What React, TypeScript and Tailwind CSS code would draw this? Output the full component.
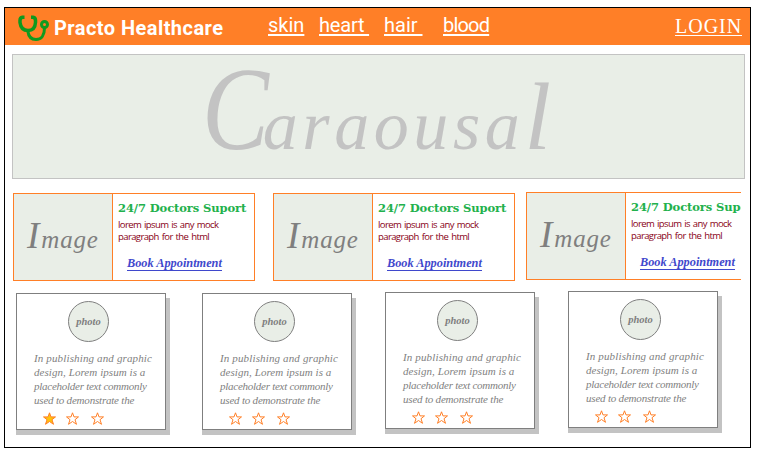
const script = "font-['Liberation_Serif',serif] italic";

function Stethoscope() {
  return (
    <svg width="32" height="27" viewBox="0 0 32 27" fill="none" stroke="#0f9a1f" className="shrink-0">
      <path d="M6.500 2.300H4.500Q2 2.800 2 5.500V7.500Q3 15.500 10 15.500T17.500 7.500V5.500Q17.500 2.800 15 2.300H13" strokeWidth="3.500" />
      <path d="M9.800 16C10.500 21.500 13.500 24.500 18 24.500C23.500 24.500 26.500 20 26.500 13" strokeWidth="3" />
      <circle cx="26.500" cy="9.500" r="3" strokeWidth="3" />
    </svg>
  );
}

function Star({ filled = false }: { filled?: boolean }) {
  return (
    <svg width="13" height="13" viewBox="0 0 13 13" className="shrink-0">
      <path
        d="M6.500 .8L8 4.900H12.500L9 7.700L10.500 12.300L6.500 9.500L2.500 12.300L4 7.700L.5 4.900H5Z"
        fill={filled ? "#ffc20e" : "#fff"}
        stroke="#ff7f27"
      />
    </svg>
  );
}

function Feature({ className = "" }: { className?: string }) {
  return (
    <article className={`flex h-[88px] w-[242px] shrink-0 border border-[#ff7f27] ${className}`}>
      <div className={`flex w-[99px] shrink-0 items-baseline border-r border-[#ff7f27] bg-[#e9eee7] pl-[13px] leading-[84px] text-[#7f7f7f] ${script}`}>
        <span className="text-[37px]">I</span>
        <span className="ml-[2px] text-[25px] tracking-[0.8px]">mage</span>
      </div>
      <div className="flex shrink-0 flex-col items-start whitespace-nowrap pl-[5px] pt-[6px]">
        <h2 className="font-['DejaVu_Serif',serif] text-[11.5px] font-bold leading-[16px] tracking-[-0.1px] text-[#22b14c]">24/7 Doctors Suport</h2>
        <p className="mt-[3px] font-['Open_Sans',sans-serif] text-[9.5px] leading-[12px] tracking-[-0.6px] text-[#880015] [word-spacing:1px]">
          lorem ipsum is any mock
          <br />
          paragraph for the html
        </p>
        <a className={`ml-[9px] mt-[13px] block h-[15px] border-b border-[#3f48cc] text-[12.3px] font-bold leading-[15px] text-[#3f48cc] ${script}`}>
          Book Appointment
        </a>
      </div>
    </article>
  );
}

function Profile({ rated = false, className = "" }: { rated?: boolean; className?: string }) {
  return (
    <article className={`h-[137px] w-[150px] shrink-0 border border-[#7f7f7f] bg-white text-[#7f7f7f] shadow-[4px_5px_0_#c3c3c3,0_5px_0_#c3c3c3] ${script} ${className}`}>
      <div className="ml-[51px] mt-[7px] flex size-[41px] items-center justify-center rounded-full border border-[#7f7f7f] bg-[#e9eee7] text-[10.5px] font-bold">
        photo
      </div>
      <p className="ml-[17px] mt-[9px] whitespace-nowrap text-[11px] leading-[14px]">
        <span className="block tracking-[0.14px]">In publishing and graphic</span>
        <span className="block tracking-[0.06px]">design, Lorem ipsum is a</span>
        <span className="block tracking-[-0.26px]">placeholder text commonly</span>
        <span className="block tracking-[-0.2px]">used to demonstrate the</span>
      </p>
      <div className="ml-[26px] mt-[5px] flex">
        <Star filled={rated} />
        <span className="w-[10px]" />
        <Star />
        <span className="w-[12px]" />
        <Star />
      </div>
    </article>
  );
}

export default function App() {
  return (
    <div className="h-[457px] w-[759px] overflow-hidden bg-white pl-[4px] pt-[7px]">
      <div className="h-[441px] w-[747px] border border-black">
        <header className="flex h-[37px] bg-[#ff7f27] pl-[13px] font-['Roboto',sans-serif] text-[20px] leading-[24px] text-white">
          <div className="mt-[7px]">
            <Stethoscope />
          </div>
          <h1 className="ml-[4px] mt-[8px] w-[214px] whitespace-nowrap font-bold tracking-[0.45px]">Practo Healthcare</h1>
          <nav className="mt-[5px] flex whitespace-pre">
            <a className="w-[51px] underline underline-offset-2">skin</a>
            <a className="w-[65px] tracking-[-0.2px]"><span className="underline underline-offset-2">heart </span></a>
            <a className="w-[59px]"><span className="underline underline-offset-2">hair </span></a>
            <a className="w-[232px] tracking-[-0.8px] underline underline-offset-2">blood</a>
          </nav>
          <a className="mt-[7px] h-[21px] border-b border-white font-['Liberation_Serif',serif] text-[20px] leading-[23px] tracking-[1px]">LOGIN</a>
        </header>
        <section className={`ml-[7px] mt-[9px] flex h-[125px] w-[733px] items-baseline border border-[#c3c3c3] bg-[#e9eee7] pl-[189px] leading-[109px] text-[#c3c3c3] ${script}`}>
          <span className="-mr-[18px] origin-left scale-x-[0.85] text-[118px]">C</span>
          <span className="text-[70px] tracking-[4.6px]">araousa</span>
          <span className="text-[95px]">l</span>
        </section>
        <section className="ml-[8px] mt-[13px] flex w-[728px] overflow-hidden">
          <Feature className="mt-px" />
          <Feature className="ml-[18px] mt-px" />
          <Feature className="ml-[11px]" />
        </section>
        <section className="ml-[11px] mt-[10px] flex">
          <Profile rated className="mt-[2px]" />
          <Profile className="ml-[36px] mt-[2px]" />
          <Profile className="ml-[33px] mt-px" />
          <Profile className="ml-[33px]" />
        </section>
      </div>
    </div>
  );
}
